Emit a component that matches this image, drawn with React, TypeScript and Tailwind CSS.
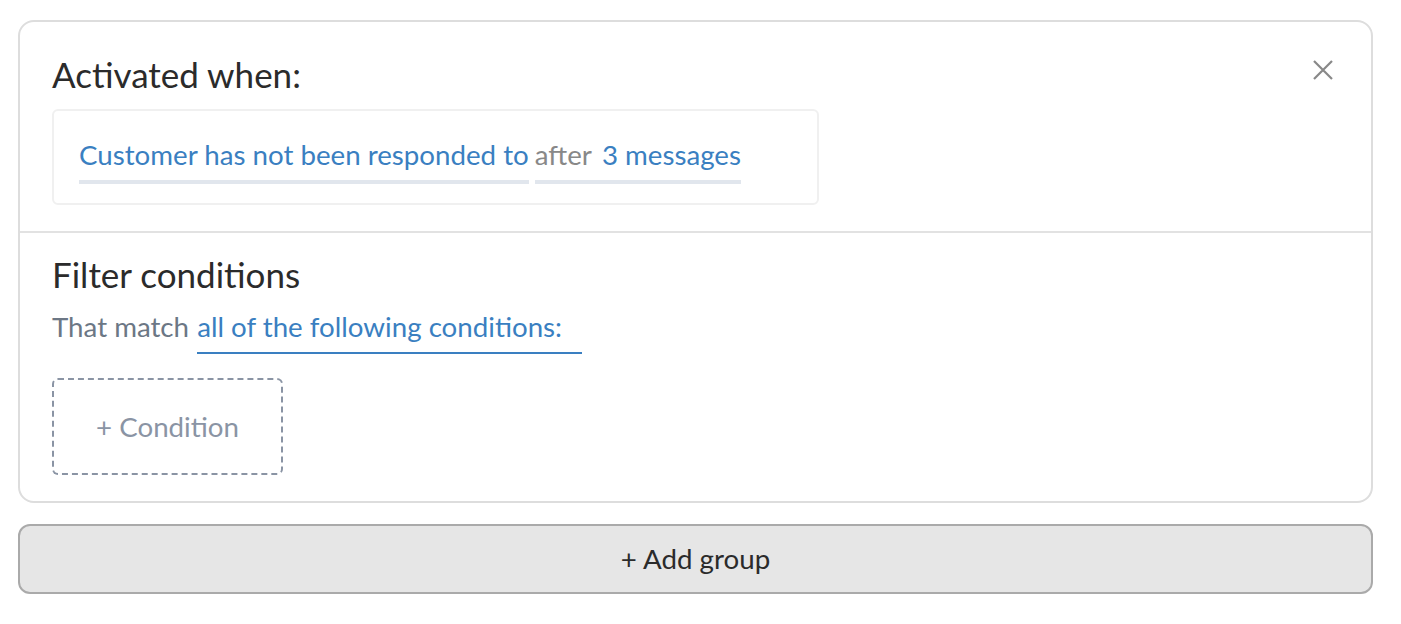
import React from "react";

export default function App() {
  return (
    <div className="min-h-screen bg-white pt-[20px] pl-[18px] pr-[28px]" style={{ fontFamily: "Lato, 'Noto Sans', sans-serif" }}>
      <div className="w-[1355px]">
        <div className="rounded-[16px] border-2 border-[#dddddd] bg-white">
          <div className="relative px-[32px] pt-[29px] pb-[26px]">
            <h2 className="text-[35px] leading-[46px] text-[#2b2b2b]">Activated when:</h2>
            <button className="absolute right-[37px] top-[37px] text-[#888888]">
              <svg width="22" height="22" viewBox="0 0 22 22" fill="none" stroke="currentColor" strokeWidth="2.2">
                <path d="M2 2L20 20M20 2L2 20" />
              </svg>
            </button>
            <div className="mt-[12px] w-[767px] rounded-[6px] border-2 border-[#f0f0f0] px-[25px] pt-[26px] pb-[19px]">
              <div className="flex items-start text-[27.7px] leading-[36px]">
                <span className="border-b-4 border-[#e1e6ed] pb-[7px] text-[#3a7fc1]">Customer has not been responded to</span>
                <span className="ml-[6px] border-b-4 border-[#e1e6ed] pb-[7px]">
                  <span className="text-[#888888]">after</span>
                  <span className="ml-[10px] text-[#3a7fc1]">3 messages</span>
                </span>
              </div>
            </div>
          </div>
          <div className="border-t-2 border-[#e2e2e2] px-[32px] pt-[18px] pb-[26px]">
            <h3 className="text-[35px] leading-[46px] text-[#2b2b2b]">Filter conditions</h3>
            <div className="mt-[12px] flex items-start text-[27.7px] leading-[36px]">
              <span className="text-[#6c7785]">That match&nbsp;</span>
              <span className="ml-[1px] w-[385px] border-b-2 border-[#3a7fc1] pb-[7px] text-[#3a7fc1]">all of the following conditions:</span>
            </div>
            <div className="mt-[24px] flex h-[97px] w-[231px] items-center justify-center rounded-[6px] border-2 border-dashed border-[#8a94a4] text-[27.7px] text-[#8a94a4]">
              + Condition
            </div>
          </div>
        </div>
        <button className="mt-[21px] flex h-[70px] w-full items-center justify-center rounded-[12px] border-2 border-[#aaaaaa] bg-[#e6e6e6] text-[27.7px] text-[#2b2b2b]">
          + Add group
        </button>
      </div>
    </div>
  );
}
